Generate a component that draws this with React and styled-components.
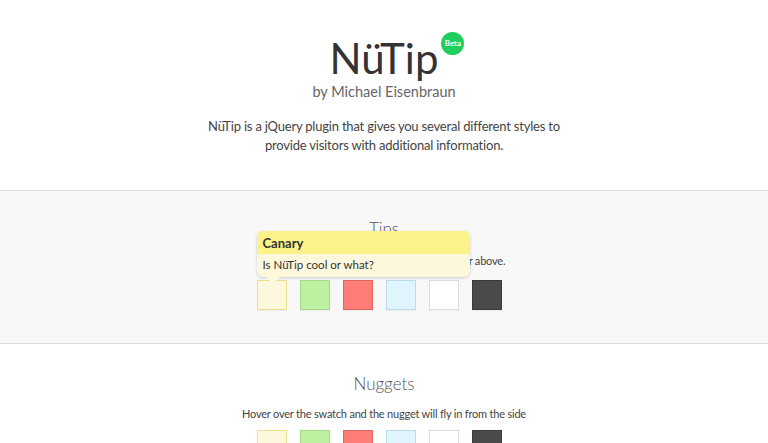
import React from 'react';
import styled, { createGlobalStyle } from 'styled-components';

const GlobalStyle = createGlobalStyle`
  html, body {
    margin: 0;
    padding: 0;
    overflow: hidden;
  }

  body {
    font-family: Lato, "Open Sans", sans-serif;
    color: #444;
    background: #fff;
  }
`;

const Header = styled.header`
  height: 190px;
  box-sizing: border-box;
  padding-top: 35px;
  text-align: center;
`;

const Title = styled.h1`
  position: relative;
  display: inline-block;
  margin: 0;
  font-size: 42px;
  font-weight: 400;
  line-height: 47px;
  color: #333;
`;

const Badge = styled.span`
  position: absolute;
  top: -3px;
  right: -26px;
  width: 23px;
  height: 23px;
  border-radius: 50%;
  background: #1ecf5e;
  color: #fff;
  font-size: 8px;
  font-weight: 700;
  line-height: 23px;
  text-align: center;
`;

const Byline = styled.div`
  font-size: 14.5px;
  color: #666;
  line-height: 20px;
`;

const Intro = styled.p`
  margin: 15px auto 0;
  max-width: 370px;
  font-size: 13px;
  letter-spacing: -0.2px;
  line-height: 19px;
  color: #444;
`;

const Section = styled.section`
  text-align: center;
  padding: ${p => (p.$shaded ? '27px 0 33px' : '29px 0 0')};
  background: ${p => (p.$shaded ? '#f8f8f8' : '#fff')};
  border-top: 1px solid #dcdcdc;
`;

const SectionTitle = styled.h2`
  margin: 0;
  font-size: 17px;
  font-weight: 300;
  line-height: 22px;
  color: #555;
`;

const SectionText = styled.p`
  margin: ${p => (p.$tight ? '11px 0 8px' : '13px 0 11px')};
  font-size: 11px;
  letter-spacing: -0.2px;
  line-height: 16px;
  color: #444;
`;

const SwatchRow = styled.div`
  display: flex;
  justify-content: center;
  gap: 13px;
  padding-right: 10px;
`;

const Swatch = styled.div`
  position: relative;
  width: 28px;
  height: 28px;
  background: ${p => p.$bg};
  border: 1px solid ${p => p.$border};
  box-shadow: 0 1px 1px rgba(0, 0, 0, 0.04);
`;

const Tooltip = styled.div`
  position: absolute;
  left: -1px;
  bottom: 32px;
  width: 213px;
  text-align: left;
  border-radius: 6px;
  background: #fdf8dc;
  box-shadow: 0 1px 3px rgba(0, 0, 0, 0.18);
  z-index: 2;

  &::after {
    content: '';
    position: absolute;
    left: 9px;
    bottom: -7px;
    border-left: 7px solid transparent;
    border-right: 7px solid transparent;
    border-top: 7px solid #fdf8dc;
  }
`;

const TipHead = styled.div`
  padding: 0 6px;
  height: 23px;
  line-height: 24px;
  font-size: 13px;
  font-weight: 700;
  color: #333;
  background: #fcf28a;
  border-radius: 6px 6px 0 0;
`;

const TipBody = styled.div`
  padding: 0 6px;
  height: 23px;
  line-height: 22px;
  font-size: 11.5px;
  color: #333;
`;

const swatches = [
  { name: 'canary', bg: '#fdf8dc', border: '#ebdf8c' },
  { name: 'green', bg: '#bdf0a0', border: '#a4d98b' },
  { name: 'red', bg: '#ff7c77', border: '#dd6560' },
  { name: 'blue', bg: '#dff4fd', border: '#badcea' },
  { name: 'white', bg: '#ffffff', border: '#dddddd' },
  { name: 'dark', bg: '#4a4a4a', border: '#3b3b3b' },
];

const App = () => (
  <>
    <GlobalStyle />
    <Header>
      <Title>
        NüTip
        <Badge>Beta</Badge>
      </Title>
      <Byline>by Michael Eisenbraun</Byline>
      <Intro>
        NüTip is a jQuery plugin that gives you several different styles to
        provide visitors with additional information.
      </Intro>
    </Header>

    <Section $shaded>
      <SectionTitle>Tips</SectionTitle>
      <SectionText>Hover over the swatch and the tip will appear above.</SectionText>
      <SwatchRow>
        {swatches.map((s, i) => (
          <Swatch key={s.name} $bg={s.bg} $border={s.border}>
            {i === 0 && (
              <Tooltip>
                <TipHead>Canary</TipHead>
                <TipBody>Is NüTip cool or what?</TipBody>
              </Tooltip>
            )}
          </Swatch>
        ))}
      </SwatchRow>
    </Section>

    <Section>
      <SectionTitle>Nuggets</SectionTitle>
      <SectionText $tight>
        Hover over the swatch and the nugget will fly in from the side
      </SectionText>
      <SwatchRow>
        {swatches.map(s => (
          <Swatch key={s.name} $bg={s.bg} $border={s.border} />
        ))}
      </SwatchRow>
    </Section>
  </>
);

export default App;
